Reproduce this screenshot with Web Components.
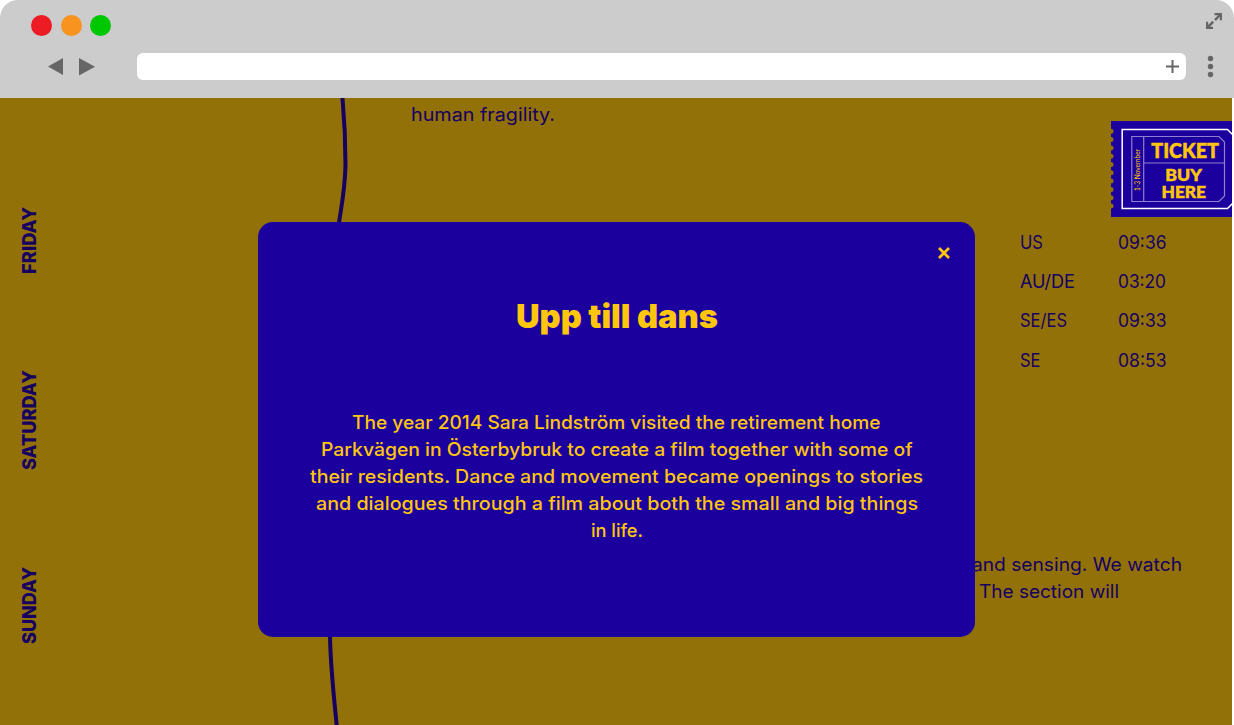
<!DOCTYPE html>
<html lang="en">
<head>
<meta charset="utf-8">
<title>Upp till dans</title>
<style>
html,body{margin:0;height:100%;overflow:hidden;background:#fff}
body{font-family:Inter,"Open Sans",sans-serif}
</style>
</head>
<body>
<app-window></app-window>
<script>
// One line of type set to an exact measure. Attributes: w, h, base, size, weight, vertical.
class FitText extends HTMLElement {
  connectedCallback() {
    const a = (n, d) => this.getAttribute(n) || d;
    const w = +a('w', 100), h = +a('h', 27), base = +a('base', 20);
    const vertical = this.hasAttribute('vertical');
    const root = this.attachShadow({ mode: 'open' });
    root.innerHTML = `<style>:host{display:block;flex:none}svg{display:block;overflow:visible}text{fill:currentColor;font-size:${a('size', 18.4)}px;font-weight:${a('weight', 400)};font-family:${a('font', 'Inter')},sans-serif;white-space:pre}</style>
      <svg width="${vertical ? h : w}" height="${vertical ? w : h}"><text textLength="${w}" lengthAdjust="spacingAndGlyphs" ${vertical ? `transform="translate(${base} ${w}) rotate(-90)"` : `y="${base}"`}></text></svg>`;
    root.querySelector('text').textContent = this.textContent;
  }
}
customElements.define('fit-text', FitText);

const define = (name, html) => customElements.define(name, class extends HTMLElement {
  constructor() {
    super();
    const t = document.createElement('template');
    t.innerHTML = html;
    this.attachShadow({ mode: 'open' }).append(t.content.cloneNode(true));
  }
});

define('browser-bar', `<style>
:host{display:grid;grid-template-rows:53px 27px;height:98px;background:#ccc;border-radius:18px 18px 0 0;box-sizing:border-box}
.top,.nav{display:flex}
.top{justify-content:space-between;padding:0 11px 0 31px}
.lights{display:flex;gap:8.4px;padding-top:15px}
i{width:21px;height:21px;border-radius:50%}
i+i{margin-left:.7px}
i+i+i{margin-left:-.5px}
.top svg{margin-top:12px}
.nav{padding-left:48px}
.field{flex:none;width:1049px;height:27px;margin-left:42px;background:#fff;border-radius:6px;display:flex;justify-content:flex-end;align-items:center;padding-right:7px;box-sizing:border-box}
.dots{margin-left:21px}
svg{display:block;fill:#666}
</style>
<div class="top"><div class="lights"><i style="background:#ed1c24"></i><i style="background:#f7931e"></i><i style="background:#00c800"></i></div>
<svg width="18" height="18"><path d="M9.500 1H17v7.200h-2.200V4.800L10.900 8.900 9.100 7.200 13 3.200H9.500ZM1 9.800h2.200v3.300l4.200-4.300 1.700 1.600L5 14.800H8V17H1Z"/></svg></div>
<div class="nav"><svg width="47" height="27"><path d="M0 13.500 15 5v17ZM31 5v17.500L47 13.700Z"/></svg>
<div class="field"><svg width="13" height="13"><path d="M5.500 0h2v5.500H13v2H7.500V13h-2V7.500H0v-2h5.500Z"/></svg></div>
<svg class="dots" width="7" height="27"><circle cx="3.500" cy="5.500" r="2.700"/><circle cx="3.500" cy="13.500" r="2.700"/><circle cx="3.500" cy="21.500" r="2.700"/></svg></div>`);

define('day-nav', `<style>
:host{display:flex;flex-direction:column;width:60px;box-sizing:border-box;padding:108.500px 0 0 15px}
fit-text+fit-text{margin-top:96.700px}
</style>
<fit-text vertical w="67" h="30" base="20.8" size="18.4" weight="800">FRIDAY</fit-text>
<fit-text vertical w="100" h="30" base="20.8" size="18.4" weight="800">SATURDAY</fit-text>
<fit-text vertical w="77" h="30" base="20.8" size="18.4" weight="800">SUNDAY</fit-text>`);

define('buy-ticket', `<style>
:host{display:block;width:121px;height:96px}
svg{display:block}
text{font-family:Lato,sans-serif;font-weight:900;fill:#ffc60e}
.big{stroke:#ffc60e;stroke-width:.5}
</style>
<svg width="121" height="96" fill="none">
<rect width="121" height="96" fill="#1c009e"/>
<path d="M0 10.300V86" stroke="#927109" stroke-width="5" stroke-linecap="round" stroke-dasharray="0 8.300"/>
<path d="M122 14 116.500 8.500H11.200V87.500H116.500L122 82" stroke="#fff" stroke-width="1.500"/>
<path d="M20.800 15.500H108L113.500 21V75L108 80.500H20.800ZM32.700 15.500V80.500M32.700 42H113.500" stroke="#8e80ce" stroke-width="1.200"/>
<text class="big" x="40.300" y="36.600" font-size="20" textLength="67.500" lengthAdjust="spacingAndGlyphs">TICKET</text>
<text class="big" x="54.300" y="59.500" font-size="16.600" textLength="36.500" lengthAdjust="spacingAndGlyphs">BUY</text>
<text class="big" x="50.500" y="76.700" font-size="16.600" textLength="44.500" lengthAdjust="spacingAndGlyphs">HERE</text>
<text transform="translate(29 70) rotate(-90)" style="font-weight:400" font-size="7" textLength="42" lengthAdjust="spacingAndGlyphs">1-3 November</text>
</svg>`);

define('time-list', `<style>
:host{display:grid;grid-template-columns:98px 48px;grid-template-rows:39px 39px 40px 39px}
</style>
<fit-text w="23">US</fit-text><fit-text w="48.500">09:36</fit-text>
<fit-text w="55">AU/DE</fit-text><fit-text w="48">03:20</fit-text>
<fit-text w="47">SE/ES</fit-text><fit-text w="48.500">09:33</fit-text>
<fit-text w="20.500">SE</fit-text><fit-text w="48.500">08:53</fit-text>`);

define('info-dialog', `<style>
:host{display:flex;flex-direction:column;align-items:center;width:717px;height:415px;box-sizing:border-box;background:#1c009e;border-radius:15px;color:#ffc60e}
.close{align-self:flex-end;margin:25px 25px 0 0;display:block}
.title{margin-top:38px}
.body{display:flex;flex-direction:column;align-items:center;margin-top:68px}
</style>
<svg class="close" width="12" height="12" fill="none" stroke="#ffc60e" stroke-width="2.800"><path d="m1 1 10 10M11 1 1 11"/></svg>
<fit-text class="title" w="202" h="43" base="31" size="32.500" weight="900">Upp till dans</fit-text>
<div class="body">
<fit-text weight="500" w="528.500" base="21">The year 2014 Sara Lindström visited the retirement home</fit-text>
<fit-text weight="500" w="591.500" base="21">Parkvägen in Österbybruk to create a film together with some of</fit-text>
<fit-text weight="500" w="613" base="21">their residents. Dance and movement became openings to stories</fit-text>
<fit-text weight="500" w="602" base="21">and dialogues through a film about both the small and big things</fit-text>
<fit-text weight="500" w="52" base="21">in life.</fit-text>
</div>`);

define('festival-page', `<style>
:host{display:grid;grid-template-columns:411px 561px 260px;position:relative;width:1232px;height:627px;background:#927109;color:#160060;overflow:hidden}
.curve{position:absolute;left:300px;top:0}
.mid{padding-top:3px}
.side{display:flex;flex-direction:column}
buy-ticket{align-self:flex-end;margin-top:23px}
time-list{margin:12px 0 0 48px}
.copy{margin-top:165px}
.second{margin-left:7px}
info-dialog{position:absolute;left:258px;top:124px}
</style>
<svg class="curve" width="60" height="627" fill="none" stroke="#160060" stroke-width="4"><path d="M42.300-2C44.500 22 45.500 50 45.500 67C45 93 41 110 38.500 128M30 535C30 565 34 600 37 630"/></svg>
<day-nav></day-nav>
<div class="mid"><fit-text w="144" base="20">human fragility.</fit-text></div>
<div class="side"><buy-ticket></buy-ticket><time-list></time-list>
<div class="copy"><fit-text w="210" base="20">and sensing. We watch</fit-text><fit-text class="second" w="140" base="20">The section will</fit-text></div></div>
<info-dialog></info-dialog>`);

define('app-window', `<style>:host{display:grid;grid-template-rows:98px 627px;width:1234px;height:725px}</style>
<browser-bar></browser-bar><festival-page></festival-page>`);
</script>
</body>
</html>
